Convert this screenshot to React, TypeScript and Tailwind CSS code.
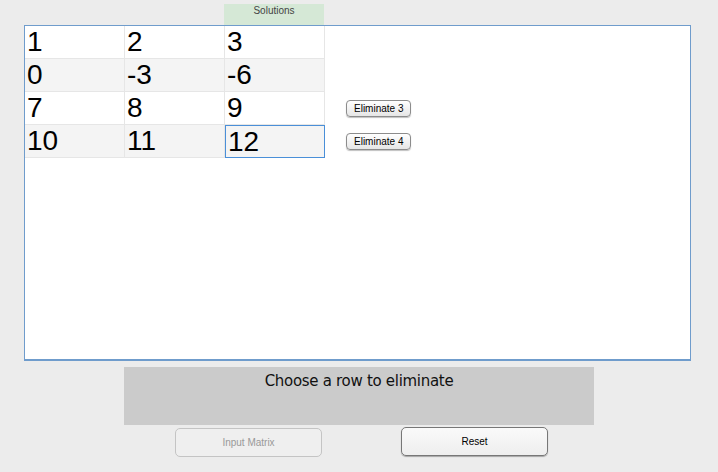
import React from 'react'

const rows = [
  ['1', '2', '3'],
  ['0', '-3', '-6'],
  ['7', '8', '9'],
  ['10', '11', '12'],
]

const btn = "h-[17px] px-[7px] rounded-[4px] border border-[#8c8c8c] bg-gradient-to-b from-white to-[#e6e6e6] text-[10px] leading-none text-black shadow-[0_1px_1px_rgba(0,0,0,0.25)]"

export default function App() {
  return (
    <div className="w-[718px] h-[472px] bg-[#ececec] relative font-['Liberation_Sans',Arial,sans-serif] overflow-hidden">
      <div className="pl-[224px] pt-[4px]">
        <div className="w-[100px] h-[21px] bg-[#d5e8d6] text-[10px] text-[#444] text-center leading-[14px]">Solutions</div>
      </div>
      <div className="ml-[24px] w-[667px] h-[336px] bg-white border border-[#6f9ccc] border-b-2 flex">
        <div className="flex flex-col">
          {rows.map((r, i) => (
            <div key={i} className={`flex h-[33px] ${i % 2 ? 'bg-[#f4f4f4]' : 'bg-white'}`}>
              {r.map((v, j) => {
                const sel = i === 3 && j === 2
                return (
                  <div
                    key={j}
                    className={`w-[100px] h-[33px] text-[28px] leading-[32px] pl-[2px] text-black border-r border-b ${sel ? 'border-l border-t border-[#4a8fd8] pl-[1px]' : 'border-[#e6e6e6]'}`}
                  >
                    {v}
                  </div>
                )
              })}
            </div>
          ))}
        </div>
        <div className="flex flex-col pt-[74px] pl-[21px] gap-[16px]">
          <button className={btn}>Eliminate 3</button>
          <button className={btn}>Eliminate 4</button>
        </div>
      </div>
      <div className="ml-[124px] mt-[6px] w-[470px] h-[58px] bg-[#cbcbcb] text-center pt-[3px] text-[15px] text-[#111] font-['DejaVu_Sans',sans-serif] tracking-[-0.3px]">
        Choose a row to eliminate
      </div>
      <div className="flex mt-[2px]">
        <button className="ml-[175px] mt-[1px] w-[147px] h-[29px] rounded-[5px] border border-[#c4c4c4] bg-[#efefef] text-[10px] text-[#999]">Input Matrix</button>
        <button className="ml-[79px] w-[147px] h-[29px] rounded-[5px] border border-[#777] bg-gradient-to-b from-[#fafafa] to-[#eeeeee] text-[10px] text-black shadow-[0_1px_1px_rgba(0,0,0,0.3)]">Reset</button>
      </div>
    </div>
  )
}
